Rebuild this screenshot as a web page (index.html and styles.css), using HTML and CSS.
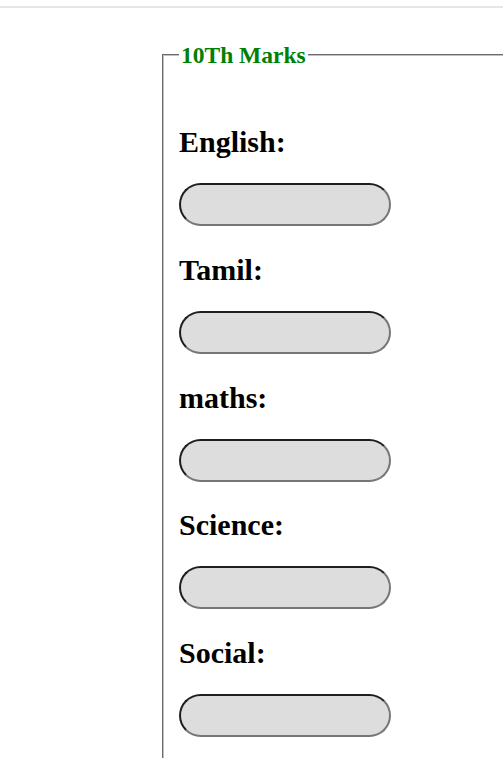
FILE: index.html
```html
<!DOCTYPE html>
<html>
<head>
<meta charset="utf-8">
<link rel="stylesheet" href="styles.css">
</head>
<body>
<div class="topbar"></div>
<form class="form">
  <fieldset class="marks">
    <legend class="marks-title">10Th Marks</legend>
    <label class="field-label" for="english">English:</label>
    <input class="field-input" id="english" type="text">
    <label class="field-label" for="tamil">Tamil:</label>
    <input class="field-input" id="tamil" type="text">
    <label class="field-label" for="maths">maths:</label>
    <input class="field-input" id="maths" type="text">
    <label class="field-label" for="science">Science:</label>
    <input class="field-input" id="science" type="text">
    <label class="field-label" for="social">Social:</label>
    <input class="field-input" id="social" type="text">
  </fieldset>
</form>
</body>
</html>
```
FILE: styles.css
```css
html, body {
  margin: 0;
  padding: 0;
  background: #fff;
  font-family: "Liberation Serif", "Times New Roman", serif;
  overflow: hidden;
}
.topbar {
  height: 6px;
  border-bottom: 2px solid #e6e6e6;
}
.form {
  margin: 0;
}
.marks {
  margin: 34px 0 0 162px;
  width: 324px;
  padding: 32px 0 40px 15px;
  border: 2px groove #c0c0c0;
  border-right: none;
}
.marks-title {
  padding: 0 2px;
  font-size: 23.5px;
  font-weight: bold;
  color: #008000;
  line-height: 26px;
}
.field-label {
  display: block;
  margin: 26.75px 0 24px 0;
  font-size: 30px;
  font-weight: bold;
  line-height: 34px;
  color: #000;
}
.marks-title + .field-label {
  margin-top: 25px;
}
.field-input {
  display: block;
  box-sizing: border-box;
  width: 212px;
  height: 43px;
  margin: 0;
  padding: 0 14px;
  border: 2px solid;
  border-color: #1e1e1e #767676 #767676 #1e1e1e;
  border-radius: 22px;
  background: #dddddd;
  font-family: inherit;
  font-size: 16px;
  outline: none;
}
```
